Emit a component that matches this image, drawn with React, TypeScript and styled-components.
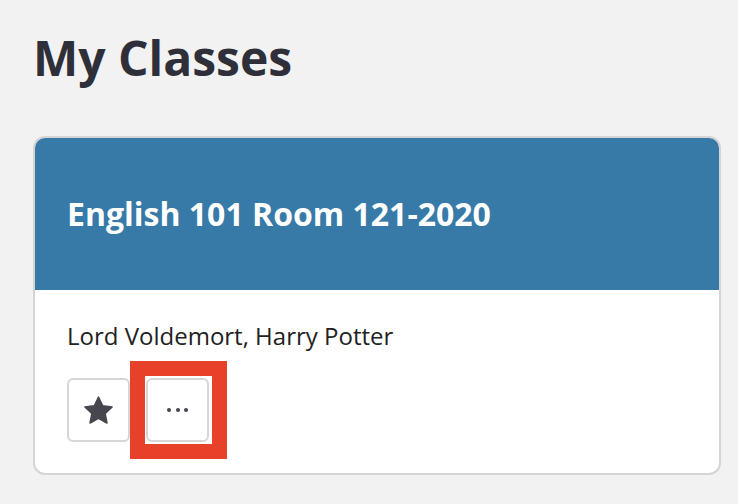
import React from "react";
import styled, { createGlobalStyle } from "styled-components";

const GlobalStyle = createGlobalStyle`
  html, body {
    margin: 0;
    padding: 0;
    background: #f2f2f2;
  }
  body {
    font-family: "Open Sans", "Liberation Sans", sans-serif;
    -webkit-font-smoothing: antialiased;
  }
`;

const Page = styled.main`
  padding: 25px 17px 40px 33px;
`;

const Title = styled.h1`
  margin: 0 0 46px 0;
  font-size: 48px;
  line-height: 65px;
  font-weight: 700;
  color: #2f2f3a;
`;

const Card = styled.section`
  width: 688px;
  box-sizing: border-box;
  border: 2px solid #d5d5d5;
  border-radius: 12px;
  background: #ffffff;
  overflow: hidden;
`;

const CardHeader = styled.header`
  height: 152px;
  box-sizing: border-box;
  padding: 0 32px;
  display: flex;
  align-items: center;
  background: #377aa8;
`;

const CardTitle = styled.h2`
  margin: 0;
  font-size: 32px;
  font-weight: 700;
  color: #ffffff;
  line-height: 42px;
`;

const CardBody = styled.div`
  padding: 28px 32px 31px;
  display: flex;
  flex-direction: column;
  gap: 24px;
`;

const Teachers = styled.p`
  margin: 0;
  font-size: 24px;
  line-height: 36px;
  color: #222222;
`;

const Actions = styled.div`
  display: flex;
  gap: 16px;
`;

const IconButton = styled.button`
  width: 63px;
  height: 64px;
  box-sizing: border-box;
  border: 2px solid #d6d6d6;
  border-radius: 6px;
  background: #ffffff;
  padding: 0;
  display: flex;
  align-items: center;
  justify-content: center;
  color: #46464f;
  cursor: pointer;
`;

const Highlight = styled.span`
  position: relative;
  display: inline-flex;
  &::after {
    content: "";
    position: absolute;
    top: -17px;
    left: -16px;
    right: -18px;
    bottom: -17px;
    border: 15px solid #e8412a;
    pointer-events: none;
  }
`;

const Star = () => (
  <svg width="31" height="29" viewBox="0 0 24 23" aria-hidden="true">
    <path
      d="M12 0.8l3.3 6.9 7.5 1-5.5 5.2 1.4 7.5L12 17.8l-6.7 3.6 1.4-7.5L1.2 8.7l7.5-1z"
      fill="currentColor"
      stroke="currentColor"
      strokeWidth="1.2"
      strokeLinejoin="round"
    />
  </svg>
);

const Dots = () => (
  <svg width="24" height="6" viewBox="0 0 24 6" aria-hidden="true">
    <circle cx="3" cy="3" r="2" fill="currentColor" />
    <circle cx="12" cy="3" r="2" fill="currentColor" />
    <circle cx="20" cy="3" r="2" fill="currentColor" />
  </svg>
);

export default function App() {
  return (
    <Page>
      <GlobalStyle />
      <Title>My Classes</Title>
      <Card>
        <CardHeader>
          <CardTitle>English 101 Room 121-2020</CardTitle>
        </CardHeader>
        <CardBody>
          <Teachers>Lord Voldemort, Harry Potter</Teachers>
          <Actions>
            <IconButton aria-label="Favorite">
              <Star />
            </IconButton>
            <Highlight>
              <IconButton aria-label="More options">
                <Dots />
              </IconButton>
            </Highlight>
          </Actions>
        </CardBody>
      </Card>
    </Page>
  );
}
